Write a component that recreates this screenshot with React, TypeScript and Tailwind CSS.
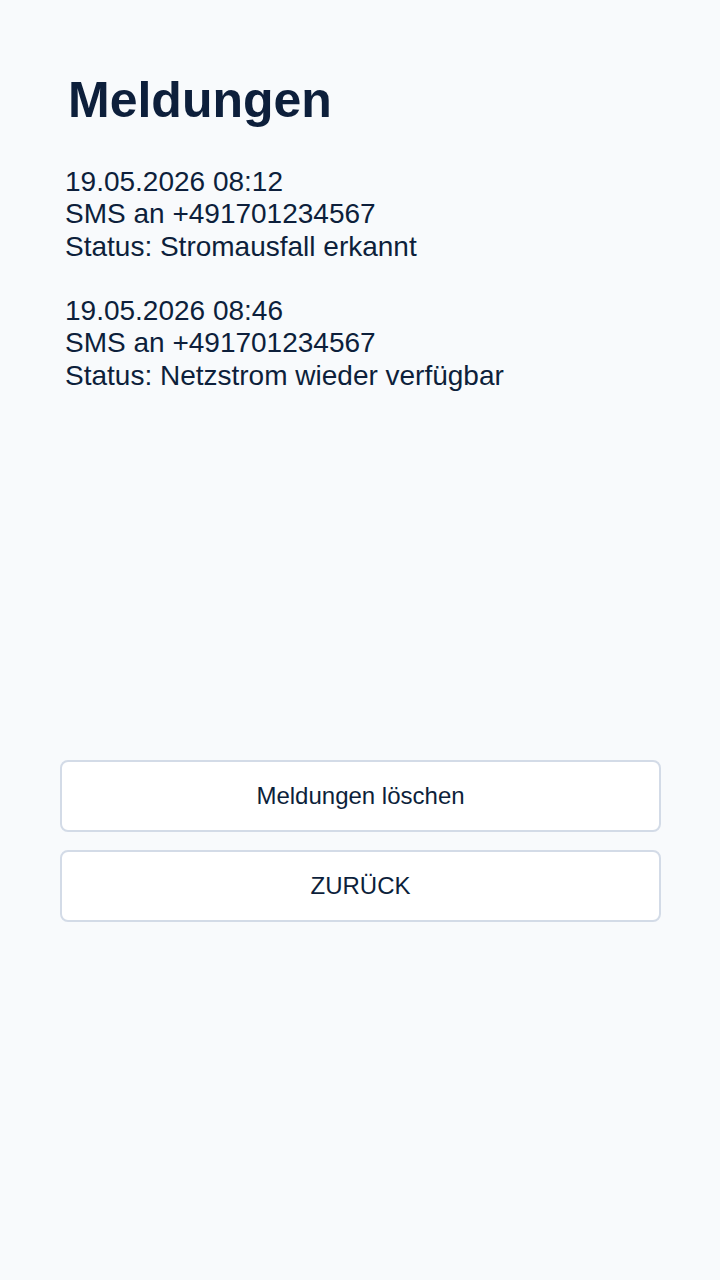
import React from 'react';

interface Meldung {
  id: string;
  time: string;
  recipient: string;
  status: string;
}

const meldungen: Meldung[] = [
  { id: '1', time: '19.05.2026 08:12', recipient: '+491701234567', status: 'Stromausfall erkannt' },
  { id: '2', time: '19.05.2026 08:46', recipient: '+491701234567', status: 'Netzstrom wieder verfügbar' },
];

export default function App() {
  return (
    <div
      className="min-h-screen bg-[#f8fafc] pl-[60px] pr-[59px] pt-[72px] text-[#0d1f3b]"
      style={{ fontFamily: '"Liberation Sans", Arial, sans-serif' }}
    >
      {/* Title */}
      <h1 className="ml-[8px] text-[50px] font-bold leading-[57px]">Meldungen</h1>

      {/* Message list */}
      <div className="mt-[37px] ml-[5px] h-[594px] text-[28px] leading-[32.3px]">
        {meldungen.map(m => (
          <div key={m.id} className="mb-[32.3px]">
            <p>{m.time}</p>
            <p>SMS an {m.recipient}</p>
            <p>Status: {m.status}</p>
          </div>
        ))}
      </div>

      {/* Actions */}
      <div className="flex flex-col gap-[18px]">
        <button className="h-[72px] w-full rounded-lg border-2 border-[#d3dbe7] bg-white text-[24px] text-[#0d1f3b]">
          Meldungen löschen
        </button>
        <button className="h-[72px] w-full rounded-lg border-2 border-[#d3dbe7] bg-white text-[24px] text-[#0d1f3b]">
          ZURÜCK
        </button>
      </div>
    </div>
  );
}
